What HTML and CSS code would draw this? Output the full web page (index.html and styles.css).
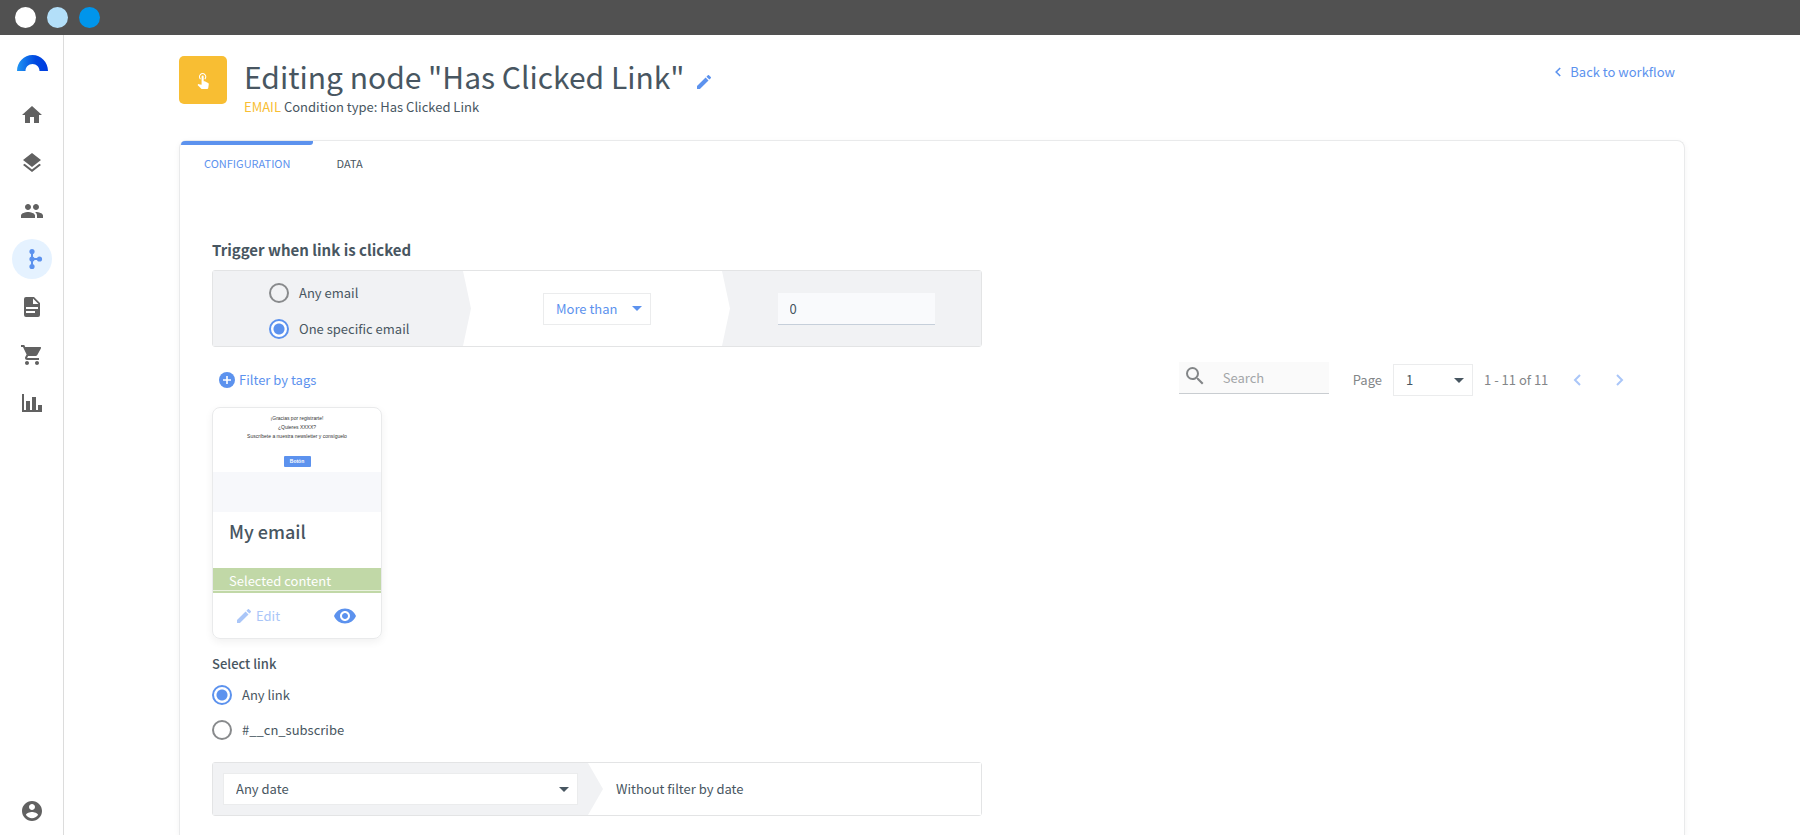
FILE: index.html
```html
<!DOCTYPE html>
<html lang="en">
<head>
<meta charset="utf-8">
<title>Editing node "Has Clicked Link"</title>
<link rel="stylesheet" href="styles.css">
</head>
<body>
<div class="window-bar">
  <span class="dot dot-white"></span>
  <span class="dot dot-light"></span>
  <span class="dot dot-blue"></span>
</div>
<div class="app">
  <nav class="sidebar" aria-label="Main">
    <a class="logo" href="#" aria-label="Dashboard">
      <svg width="32" height="16" viewBox="0 0 32 16">
        <defs><linearGradient id="logo-fill" x1="0" y1="0" x2="1" y2="0"><stop offset="0" stop-color="#2196f3"/><stop offset=".6" stop-color="#0048e0"/><stop offset="1" stop-color="#003ce0"/></linearGradient></defs>
        <path fill="url(#logo-fill)" d="M1 16C1 7 8 0 16.500 0S32 7 32 16h-8.500c0-4-3-7-7-7s-7 3-7 7z"/>
      </svg>
    </a>
    <a class="nav-item" href="#" aria-label="Home"><svg class="icon" viewBox="0 0 24 24"><path d="M10 20v-6h4v6h5v-8h3L12 3 2 12h3v8z"/></svg></a>
    <a class="nav-item" href="#" aria-label="Content"><svg class="icon" viewBox="0 0 24 24"><path d="M11.990 18.540l-7.370-5.730L3 14.070l9 7 9-7-1.630-1.270-7.380 5.740zM12 16l7.360-5.730L21 9l-9-7-9 7 1.630 1.270L12 16z"/></svg></a>
    <a class="nav-item" href="#" aria-label="Contacts"><svg class="icon" viewBox="0 0 24 24"><path d="M16 11c1.660 0 2.990-1.340 2.990-3S17.660 5 16 5s-3 1.340-3 3 1.340 3 3 3zm-8 0c1.660 0 2.990-1.340 2.990-3S9.660 5 8 5 5 6.340 5 8s1.340 3 3 3zm0 2c-2.330 0-7 1.170-7 3.500V19h14v-2.500c0-2.330-4.670-3.500-7-3.500zm8 0c-.290 0-.620.020-.970.050 1.160.840 1.970 1.970 1.970 3.450V19h6v-2.500c0-2.330-4.670-3.500-7-3.500z"/></svg></a>
    <a class="nav-item active" href="#" aria-label="Workflows"><svg class="icon" viewBox="0 0 24 24"><circle cx="12" cy="4.500" r="2.600"/><circle cx="12" cy="12" r="2.600"/><circle cx="12" cy="19.500" r="2.600"/><circle cx="19.500" cy="12" r="2.600"/><path d="M11 4h2v7h6v2h-6v7h-2z"/></svg></a>
    <a class="nav-item" href="#" aria-label="Documents"><svg class="icon" viewBox="0 0 24 24"><path fill-rule="evenodd" d="M6 2h8l6 6v12a2 2 0 0 1-2 2H6a2 2 0 0 1-2-2V4a2 2 0 0 1 2-2zm7 1.500V9h5.500zM6 12v2h12v-2zm0 4v2h9v-2z"/></svg></a>
    <a class="nav-item" href="#" aria-label="Shop"><svg class="icon" viewBox="0 0 24 24"><path d="M7 18c-1.100 0-1.990.9-1.990 2S5.900 22 7 22s2-.9 2-2-.9-2-2-2zM1 2v2h2l3.600 7.590-1.350 2.450c-.160.280-.250.610-.250.960 0 1.100.9 2 2 2h12v-2H7.420c-.140 0-.250-.110-.250-.250l.030-.120.900-1.630h7.450c.750 0 1.410-.410 1.750-1.030l3.580-6.490A1 1 0 0 0 20 4H5.210l-.940-2H1zm16 16c-1.100 0-1.990.9-1.990 2s.890 2 1.990 2 2-.9 2-2-.9-2-2-2z"/></svg></a>
    <a class="nav-item" href="#" aria-label="Reports"><svg class="icon" viewBox="0 0 24 24"><path d="M2 3h2v16h2V10h4v9h2V6h4v13h2v-5h4v7H2z"/></svg></a>
    <a class="nav-item account" href="#" aria-label="Account"><svg class="icon" viewBox="0 0 24 24"><path d="M12 2C6.480 2 2 6.480 2 12s4.480 10 10 10 10-4.480 10-10S17.520 2 12 2zm0 3c1.660 0 3 1.340 3 3s-1.340 3-3 3-3-1.340-3-3 1.340-3 3-3zm0 14.200c-2.500 0-4.710-1.280-6-3.220.030-1.990 4-3.080 6-3.080 1.990 0 5.970 1.090 6 3.080-1.290 1.940-3.500 3.220-6 3.220z"/></svg></a>
  </nav>

  <main class="main">
    <header class="page-head">
      <div class="node-icon">
        <svg width="18" height="18" viewBox="0 0 24 24"><path fill="none" stroke="#fff" stroke-width="1.400" d="M8.600 10.700a4.200 4.200 0 1 1 5.800 0"/><path fill="#fff" d="M18.840 15.870l-4.540-2.260c-.170-.070-.350-.110-.540-.110H12.900v-6a1.400 1.400 0 0 0-2.800 0v10.740l-3.530-.720c-.080-.010-.150-.030-.240-.030-.310 0-.590.130-.790.330l-.790.800 4.940 4.940c.270.270.650.440 1.060.440h6.790c.750 0 1.330-.550 1.440-1.280l.750-5.270c.010-.070.020-.140.020-.200 0-.620-.380-1.160-.910-1.380z"/></svg>
      </div>
      <div class="head-text">
        <div class="title-row">
          <h1 class="title">Editing node "Has Clicked Link"</h1>
          <button class="icon-button" type="button" aria-label="Rename node"><svg class="pencil" viewBox="3 3 18 18"><path d="M3 17.250V21h3.750L17.810 9.940l-3.750-3.750L3 17.250zM20.710 7.040a1 1 0 0 0 0-1.410l-2.340-2.340a1 1 0 0 0-1.410 0l-1.830 1.830 3.750 3.750 1.830-1.830z"/></svg></button>
        </div>
        <p class="subtitle"><span class="kind">EMAIL</span> Condition type: Has Clicked Link</p>
      </div>
      <a class="back" href="#"><svg width="6" height="10" viewBox="0 0 6 10"><path fill="none" stroke="currentColor" stroke-width="1.600" d="M5.200 1L1.200 5l4 4"/></svg>Back to workflow</a>
    </header>

    <section class="panel">
      <div class="tabs" role="tablist">
        <button class="tab selected" type="button" role="tab" aria-selected="true">CONFIGURATION</button>
        <button class="tab" type="button" role="tab" aria-selected="false">DATA</button>
      </div>
      <form class="content">
        <h2 class="heading">Trigger when link is clicked</h2>
        <div class="rule trigger">
          <div class="segment shaded scope">
            <label class="radio"><input type="radio" name="scope">Any email</label>
            <label class="radio"><input type="radio" name="scope" checked>One specific email</label>
          </div>
          <div class="segment">
            <div class="select-wrap accent">
              <select class="select" aria-label="Comparison"><option>More than</option></select>
              <svg class="caret" viewBox="0 0 10 5"><path d="M0 0h10L5 5z"/></svg>
            </div>
          </div>
          <div class="segment shaded">
            <input class="amount" type="text" value="0" aria-label="Amount">
          </div>
        </div>

        <div class="toolbar">
          <button class="filter" type="button"><svg width="16" height="16" viewBox="0 0 16 16"><circle cx="8" cy="8" r="8" fill="#5c92ee"/><path d="M8 4v8M4 8h8" stroke="#fff" stroke-width="1.600"/></svg>Filter by tags</button>
          <div class="search">
            <svg width="18" height="18" viewBox="3 3 18 18"><path fill="#838688" d="M15.500 14h-.790l-.280-.270A6.470 6.470 0 0 0 16 9.500 6.500 6.500 0 1 0 9.500 16c1.610 0 3.090-.590 4.230-1.570l.270.280v.790l5 4.990L20.490 19l-4.990-5zm-6 0C7.010 14 5 11.990 5 9.500S7.010 5 9.500 5 14 7.010 14 9.500 11.990 14 9.500 14z"/></svg>
            <input class="search-input" type="text" placeholder="Search" aria-label="Search">
          </div>
          <div class="pager">
            <label for="page">Page</label>
            <div class="select-wrap page">
              <select class="select" id="page"><option>1</option></select>
              <svg class="caret" viewBox="0 0 10 5"><path d="M0 0h10L5 5z"/></svg>
            </div>
            <span class="range">1 - 11 of 11</span>
            <button class="step" type="button" aria-label="Previous page"><svg width="8" height="12" viewBox="0 0 8 12"><path d="M7 1L2 6l5 5"/></svg></button>
            <button class="step" type="button" aria-label="Next page"><svg width="8" height="12" viewBox="0 0 8 12"><path d="M1 1l5 5-5 5"/></svg></button>
          </div>
        </div>

        <article class="card">
          <div class="preview">
            <p>¡Gracias por registrarte!</p>
            <p>¿Quieres XXXX?</p>
            <p>Suscríbete a nuestra newsletter y consíguelo</p>
            <span class="preview-button">Botón</span>
          </div>
          <div class="preview-rest"></div>
          <h3 class="card-title">My email</h3>
          <div class="status">Selected content</div>
          <div class="card-actions">
            <button class="edit" type="button" disabled><svg class="pencil" viewBox="3 3 18 18"><path d="M3 17.250V21h3.750L17.810 9.940l-3.750-3.750L3 17.250zM20.710 7.040a1 1 0 0 0 0-1.410l-2.340-2.340a1 1 0 0 0-1.410 0l-1.830 1.830 3.750 3.750 1.830-1.830z"/></svg>Edit</button>
            <button class="icon-button" type="button" aria-label="Preview"><svg width="22" height="16" viewBox="1 4 22 16"><path d="M12 4.500C7 4.500 2.730 7.610 1 12c1.730 4.390 6 7.500 11 7.500s9.270-3.110 11-7.500c-1.730-4.390-6-7.500-11-7.500zM12 17c-2.760 0-5-2.240-5-5s2.240-5 5-5 5 2.240 5 5-2.240 5-5 5zm0-8c-1.660 0-3 1.340-3 3s1.340 3 3 3 3-1.340 3-3-1.340-3-3-3z"/></svg></button>
          </div>
        </article>

        <fieldset class="links">
          <legend class="legend">Select link</legend>
          <label class="radio"><input type="radio" name="link" checked>Any link</label>
          <label class="radio"><input type="radio" name="link">#__cn_subscribe</label>
        </fieldset>

        <div class="rule dates">
          <div class="segment shaded wide-tip">
            <div class="select-wrap date">
              <select class="select" aria-label="Date"><option>Any date</option></select>
              <svg class="caret" viewBox="0 0 10 5"><path d="M0 0h10L5 5z"/></svg>
            </div>
          </div>
          <div class="segment note">Without filter by date</div>
        </div>
      </form>
    </section>
  </main>
</div>
</body>
</html>
```
FILE: styles.css
```css
* {
  box-sizing: border-box;
}

body {
  margin: 0;
  min-height: 100vh;
  display: flex;
  flex-direction: column;
  background: #fff;
  color: #485661;
  font-family: "Noto Sans CJK SC", "Noto Sans", sans-serif;
  font-size: 13px;
  line-height: 20px;
}

h1, h2, h3, p {
  margin: 0;
}

button, input, select {
  font: inherit;
  color: inherit;
}

button {
  border: 0;
  padding: 0;
  background: none;
  cursor: pointer;
}

a {
  color: inherit;
  text-decoration: none;
}

svg {
  display: block;
  flex: none;
}

.window-bar {
  display: flex;
  align-items: center;
  gap: 11px;
  height: 35px;
  padding-left: 15px;
  background: #515151;
}

.dot {
  width: 21px;
  height: 21px;
  border-radius: 50%;
}

.dot-white { background: #fff; }
.dot-light { background: #b3dff9; }
.dot-blue { background: #0095eb; }

.app {
  flex: 1;
  display: flex;
}

.sidebar {
  flex: none;
  width: 64px;
  display: flex;
  flex-direction: column;
  align-items: center;
  gap: 8px;
  padding: 20px 0 4px;
  border-right: 1px solid #dcdcdc;
}

.logo {
  height: 32px;
}

.nav-item {
  display: flex;
  align-items: center;
  justify-content: center;
  width: 40px;
  height: 40px;
  border-radius: 50%;
}

.nav-item.active {
  background: #e5f2ff;
}

.icon {
  width: 24px;
  height: 24px;
  fill: #616161;
}

.active .icon {
  fill: #5c92ee;
}

.account {
  margin-top: auto;
}

.main {
  flex: 1;
  min-width: 0;
  display: flex;
  flex-direction: column;
  padding: 21px 115px 0;
}

.page-head {
  display: flex;
  align-items: flex-start;
  height: 84px;
}

.node-icon {
  display: flex;
  align-items: center;
  justify-content: center;
  width: 48px;
  height: 48px;
  margin-right: 17px;
  border-radius: 5px;
  background: #f8be33;
}

.head-text {
  flex: 1;
}

.title-row {
  display: flex;
  align-items: center;
  gap: 12px;
}

.title {
  font-size: 30px;
  line-height: 41px;
  font-weight: 400;
}

.icon-button svg {
  fill: #5c92ee;
}

.title-row .icon-button {
  padding-top: 10px;
}

.pencil {
  width: 14px;
  height: 14px;
  fill: #5c92ee;
}

.kind {
  color: #f8be33;
}

.back {
  display: flex;
  align-items: center;
  gap: 9px;
  margin: 6px 10px 0 0;
  color: #5c92ee;
}

.panel {
  flex: 1;
  border: 1px solid #e9eaeb;
  border-bottom: 0;
  border-radius: 8px 8px 0 0;
  box-shadow: 0 2px 6px rgba(0, 0, 0, .05);
}

.tabs {
  display: flex;
  padding-left: 1px;
}

.tab {
  height: 40px;
  padding: 0 23px;
  border-top: 4px solid transparent;
  font-size: 11px;
}

.tab.selected {
  color: #5c92ee;
  position: relative;
}

.tab.selected::before {
  content: "";
  position: absolute;
  inset: -4px 0 auto;
  height: 4px;
  border-radius: 4px 0 3px 0;
  background: #5c92ee;
}

.content {
  padding: 57px 32px 19px;
}

.heading {
  font-size: 15px;
  line-height: 24px;
  font-weight: 700;
}

.rule {
  display: grid;
  max-width: 770px;
  border: 1px solid #e3e4e5;
  border-radius: 3px;
}

.trigger {
  grid-template-columns: 250px 1fr 1fr;
  height: 77px;
  margin-top: 8px;
}

.segment {
  position: relative;
  display: flex;
  align-items: center;
  justify-content: center;
  background: #fff;
}

.segment.shaded {
  background: #f1f2f4;
}

.segment + .segment {
  padding-left: 9px;
}

.segment:not(:last-child)::after {
  content: "";
  position: absolute;
  z-index: 1;
  inset: 0 -8px 0 auto;
  width: 8px;
  background: inherit;
  clip-path: polygon(0 0, 100% 50%, 0 100%);
}

.scope {
  flex-direction: column;
  gap: 16px;
  padding-top: 5px;
}

.scope .radio {
  width: 138px;
}

.radio {
  display: flex;
  align-items: center;
  gap: 10px;
  height: 20px;
  line-height: 18px;
  white-space: nowrap;
}

.radio input {
  flex: none;
  appearance: none;
  width: 20px;
  height: 20px;
  margin: 0;
  border: 2px solid #888a8c;
  border-radius: 50%;
}

.radio input:checked {
  border-color: #5c92ee;
  background: radial-gradient(circle, #5c92ee 5px, #fff 6px);
}

.select-wrap {
  display: flex;
  align-items: center;
  position: relative;
  width: 80px;
  height: 32px;
  border: 1px solid #ebeced;
  background: #fff;
}

.select {
  appearance: none;
  width: 100%;
  height: 30px;
  padding: 0 12px;
  border: 0;
  background: none;
}

.caret {
  position: absolute;
  right: 8px;
  width: 10px;
  height: 5px;
  fill: #485661;
  pointer-events: none;
}

.page {
  color: #485661;
}

.accent {
  width: 108px;
  color: #5c92ee;
}

.accent .caret {
  fill: #5c92ee;
}

.amount {
  width: 157px;
  height: 32px;
  padding: 0 12px;
  border: 0;
  border-bottom: 1px solid #c6cfda;
  background: #f9fafc;
}

.toolbar {
  display: flex;
  align-items: flex-start;
  margin: 15px 16px 0 7px;
  height: 45px;
  color: #838688;
}

.filter {
  display: flex;
  align-items: center;
  gap: 4px;
  height: 36px;
  margin-right: auto;
  color: #5c92ee;
}

.search {
  display: flex;
  align-items: center;
  gap: 19px;
  width: 150px;
  height: 32px;
  padding: 0 7px;
  border-bottom: 1px solid #c9cdd1;
  background: #fafafa;
}

.search svg {
  margin-bottom: 3px;
}

.search-input {
  min-width: 0;
  width: 100%;
  padding: 0;
  border: 0;
  background: none;
}

.search-input::placeholder {
  color: #a3a6a8;
  opacity: 1;
}

.pager {
  display: flex;
  align-items: center;
  gap: 11px;
  margin: 2px 0 0 24px;
}

.range {
  min-width: 66px;
}

.step {
  display: flex;
  justify-content: center;
  width: 32px;
}

.step svg {
  fill: none;
  stroke: #aac6f8;
  stroke-width: 2;
}

.card {
  width: 170px;
  border: 1px solid #e9eaeb;
  border-radius: 8px;
  box-shadow: 0 3px 8px rgba(0, 0, 0, .06);
}

.preview {
  display: flex;
  flex-direction: column;
  align-items: center;
  height: 64px;
  padding-top: 6px;
  color: #333;
  font-family: "Liberation Sans", Arial, sans-serif;
  font-size: 5px;
  line-height: 9px;
  white-space: nowrap;
}

.preview-button {
  width: 27px;
  margin-top: 15px;
  line-height: 11px;
  border-radius: 1px;
  background: #5c92ee;
  color: #fff;
  font-weight: 700;
  text-align: center;
}

.preview-rest {
  height: 40px;
  background: #f7f8fb;
}

.card-title {
  height: 56px;
  padding: 6px 16px;
  font-size: 18px;
  line-height: 26px;
  font-weight: 500;
}

.status {
  height: 25px;
  padding: 3px 16px 0;
  background: linear-gradient(#eaf2df, #eaf2df) 0 22px / 100% 1px no-repeat #c1d8a7;
  color: #fff;
}

.card-actions {
  display: flex;
  align-items: center;
  justify-content: space-between;
  height: 45px;
  padding: 0 25px 0 24px;
}

.edit {
  display: flex;
  align-items: center;
  gap: 5px;
  color: #aac6f8;
}

.edit .pencil {
  fill: #aac6f8;
}

.links {
  display: grid;
  gap: 15px;
  margin: 15px 0 22px;
  padding: 0;
  border: 0;
}

.legend {
  padding: 0;
  margin-bottom: 11px;
  font-weight: 500;
}

.dates {
  grid-template-columns: 375px 1fr;
  height: 54px;
}

.segment.wide-tip::after {
  right: -15px;
  width: 15px;
}

.date {
  width: 355px;
}

.segment.note {
  justify-content: flex-start;
  padding-left: 28px;
}
```
